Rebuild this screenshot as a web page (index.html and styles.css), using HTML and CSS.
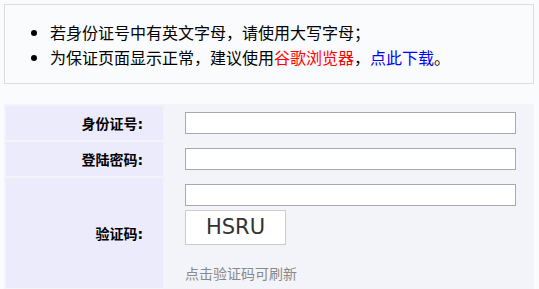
FILE: index.html
```html
<!DOCTYPE html>
<html lang="zh-CN">
<head>
<meta charset="utf-8">
<title>登录</title>
<link rel="stylesheet" href="styles.css">
</head>
<body>
<div class="notice">
  <ul class="notice-list">
    <li>若身份证号中有英文字母，请使用大写字母；</li>
    <li>为保证页面显示正常，建议使用<span class="red">谷歌浏览器</span>，<a class="blue" href="#">点此下载</a>。</li>
  </ul>
</div>
<table class="form">
  <tr class="row">
    <th class="label">身份证号:</th>
    <td class="field"><input class="input" type="text"></td>
  </tr>
  <tr class="row">
    <th class="label">登陆密码:</th>
    <td class="field"><input class="input" type="password"></td>
  </tr>
  <tr class="row-tall">
    <th class="label">验证码:</th>
    <td class="field">
      <input class="input" type="text">
      <div class="captcha">HSRU</div>
      <div class="hint">点击验证码可刷新</div>
    </td>
  </tr>
</table>
</body>
</html>
```
FILE: styles.css
```css
html, body {
  margin: 0;
  padding: 0;
  background: #fafbfd;
}
body {
  padding: 4px;
  font-family: "Noto Sans CJK SC", sans-serif;
  color: #000;
}
.notice {
  box-sizing: border-box;
  width: 530px;
  border: 1px solid #dcdcdc;
  background: #fafbfd;
  padding: 15px 0 13px 5px;
}
.notice-list {
  margin: 0;
  padding-left: 40px;
  font-size: 16px;
  line-height: 25px;
  list-style: disc;
}
.red {
  color: #ff0000;
}
.blue {
  color: #0000ff;
  text-decoration: none;
}
.form {
  margin-top: 20px;
  width: 530px;
  border-spacing: 2px;
  background: #f3f4f9;
}
.label {
  width: 137px;
  padding: 0 20px 0 0;
  text-align: right;
  vertical-align: middle;
  background: #ebebfc;
  font-family: "DejaVu Sans", "Noto Sans CJK SC", sans-serif;
  font-size: 14px;
  font-weight: bold;
}
.row .label, .row .field {
  height: 34px;
}
.row-tall .label, .row-tall .field {
  height: 110px;
}
.field {
  padding: 6px 0 0 20px;
  vertical-align: top;
  box-sizing: border-box;
}
.input {
  display: block;
  box-sizing: border-box;
  width: 331px;
  height: 22px;
  margin: 0;
  border: 1px solid #a9a9a9;
  background: #fff;
  padding: 0 4px;
}
.captcha {
  margin-top: 4px;
  box-sizing: border-box;
  width: 101px;
  height: 35px;
  border: 1px solid #cccccc;
  background: #fff;
  color: #333;
  font-family: "DejaVu Sans", sans-serif;
  font-size: 21px;
  line-height: 33px;
  text-align: center;
  cursor: pointer;
}
.hint {
  margin-top: 18px;
  font-size: 14px;
  line-height: 20px;
  color: #888;
}
```
